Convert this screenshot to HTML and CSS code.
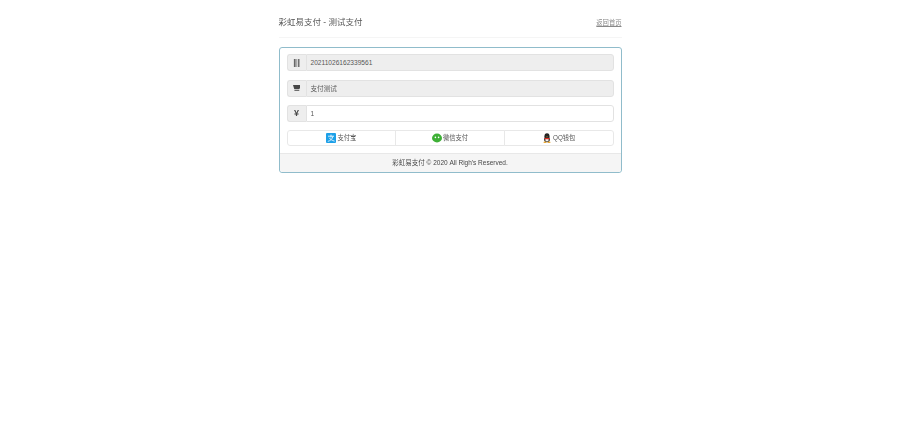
FILE: index.html
```html
<!DOCTYPE html>
<html lang="zh-CN">
<head>
<meta charset="utf-8">
<title>彩虹易支付 - 测试支付</title>
<link rel="stylesheet" href="styles.css">
</head>
<body>
<div class="page">
  <div class="header">
    <h3 class="title">彩虹易支付 - 测试支付</h3>
    <a class="back" href="#">返回首页</a>
  </div>
  <div class="panel">
    <div class="form">
      <div class="group">
        <span class="addon">
          <svg class="glyph" viewBox="0 0 8 9"><path fill="#666" d="M1 0h2v9H1zM4 0h.8v9H4zM5.8 0h1.6v9H5.8z" /></svg>
        </span>
        <span class="field readonly">20211026162339561</span>
      </div>
      <div class="group">
        <span class="addon">
          <svg class="glyph cart" viewBox="0 0 8 9"><path fill="#444" d="M0 1h8v3.6L7.2 5.6H1.4zM1.6 6.4h5.6v1.2H1.6z" /></svg>
        </span>
        <span class="field readonly">支付测试</span>
      </div>
      <div class="group">
        <span class="addon"><b class="yen">¥</b></span>
        <span class="field">1</span>
      </div>
      <div class="methods">
        <a class="method" href="#">
          <svg class="pay-icon" viewBox="0 0 10 10"><rect width="10" height="10" rx="1" fill="#1a9fe8"/><path fill="none" stroke="#fff" stroke-width=".8" d="M2 3.2h6M5 1.6v3M7 3.2C6.5 5.8 4.5 7.8 1.8 8.4M3.2 4.8c1 1.6 3 2.7 5.4 3.3"/></svg>
          <span>支付宝</span>
        </a>
        <a class="method" href="#">
          <svg class="pay-icon" viewBox="0 0 10 10"><ellipse cx="5" cy="5" rx="5" ry="4.4" fill="#3cb034"/><circle cx="3.4" cy="4.4" r=".8" fill="#fff"/><circle cx="6.6" cy="4.4" r=".8" fill="#fff"/></svg>
          <span>微信支付</span>
        </a>
        <a class="method" href="#">
          <svg class="pay-icon" viewBox="0 0 10 10"><ellipse cx="5" cy="3.6" rx="2.6" ry="3.4" fill="#222"/><ellipse cx="5" cy="6.6" rx="2.9" ry="2.6" fill="#333"/><ellipse cx="5" cy="6.8" rx="1.7" ry="1.8" fill="#f3f3f3"/><path fill="#e02a1f" d="M2.2 5h5.6l-.6 1.3H2.8z"/><ellipse cx="3" cy="9.2" rx="1.6" ry=".8" fill="#e8a020"/><ellipse cx="7" cy="9.2" rx="1.6" ry=".8" fill="#e8a020"/><path fill="#e8a020" d="M4 3.4h2l-1 .8z"/></svg>
          <span>QQ钱包</span>
        </a>
      </div>
    </div>
    <div class="footer">彩虹易支付 © 2020 All Righ's Reserved.</div>
  </div>
</div>
</body>
</html>
```

FILE: styles.css
```css
* { box-sizing: border-box; }
html, body { margin: 0; background: #fff; }
body {
  font-family: "Liberation Sans", "Noto Sans CJK SC", sans-serif;
  font-size: 8px;
  color: #555;
  min-height: 429px;
}
.page {
  width: 343px;
  margin: 0 auto;
  filter: blur(0.4px);
  opacity: 0.99;
}
.header {
  display: flex;
  justify-content: space-between;
  align-items: flex-end;
  height: 38px;
  padding: 0 0 9px;
  border-bottom: 1px solid #f5f5f5;
  margin-bottom: 9px;
}
.title {
  margin: 0;
  font-size: 8.5px;
  font-weight: 400;
  line-height: 12px;
  color: #555;
}
.back {
  font-size: 6.3px;
  line-height: 10px;
  margin-bottom: 0;
  color: #888;
  text-decoration: underline;
}
.panel {
  border: 1px solid #8fbccb;
  border-radius: 3px;
  height: 126px;
  display: flex;
  flex-direction: column;
}
.form {
  flex: 1;
  padding: 6px 7px 0;
  display: flex;
  flex-direction: column;
}
.group {
  display: flex;
  height: 17px;
  margin-bottom: 9px;
}
.group:nth-child(2) { margin-bottom: 8px; }
.addon {
  width: 19px;
  flex: none;
  display: flex;
  align-items: center;
  justify-content: center;
  background: #eee;
  border: 1px solid #e2e2e2;
  border-right: 0;
  border-radius: 3px 0 0 3px;
}
.glyph { width: 7px; height: 8px; }
.cart { margin-top: -1px; }
.yen { font-size: 9px; color: #444; line-height: 1; }
.field {
  flex: 1;
  display: flex;
  align-items: center;
  padding: 0 0 1px 4px;
  background: #fff;
  border: 1px solid #e2e2e2;
  border-radius: 0 3px 3px 0;
  font-size: 6.6px;
  color: #555;
}
.readonly { background: #eee; }
.methods {
  display: flex;
  height: 16px;
  margin-top: -1px;
}
.method {
  flex: 1;
  display: flex;
  align-items: center;
  justify-content: center;
  gap: 1px;
  background: #fff;
  border: 1px solid #e8e8e8;
  margin-left: -1px;
  color: #555;
  font-size: 6.3px;
  text-decoration: none;
}
.method span { margin-top: -1px; }
.method:first-child { margin-left: 0; border-radius: 3px 0 0 3px; }
.method:last-child { border-radius: 0 3px 3px 0; }
.pay-icon { width: 10px; height: 10px; flex: none; }
.footer {
  height: 19px;
  padding-bottom: 2px;
  display: flex;
  align-items: center;
  justify-content: center;
  background: #f5f5f5;
  border-top: 1px solid #e8e8e8;
  font-size: 6.5px;
  color: #444;
  border-radius: 0 0 3px 3px;
}
```
